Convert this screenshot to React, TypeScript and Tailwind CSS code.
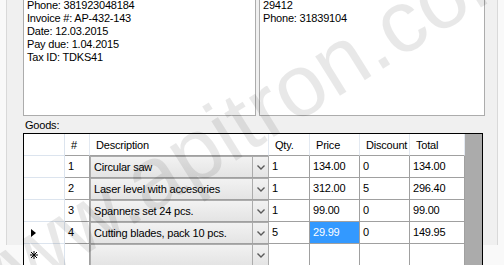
const rows = [
  { n: "1", desc: "Circular saw", qty: "1", price: "134.00", disc: "0", total: "134.00" },
  { n: "2", desc: "Laser level with accesories", qty: "1", price: "312.00", disc: "5", total: "296.40" },
  { n: "3", desc: "Spanners set 24 pcs.", qty: "1", price: "99.00", disc: "0", total: "99.00" },
  { n: "4", desc: "Cutting blades, pack 10 pcs.", qty: "5", price: "29.99", disc: "0", total: "149.95", current: true },
];

function Chevron() {
  return (
    <svg width="8" height="5" viewBox="0 0 8 5">
      <polyline points="0.5,0.5 4,4 7.5,0.5" fill="none" stroke="#5a5a5a" strokeWidth="1.4" />
    </svg>
  );
}

function Combo({ text }: { text: string }) {
  return (
    <div className="flex h-[22px] w-[179px] border-b border-[#a0a0a0]">
      <div className="flex w-full border-x border-t border-[#acacac] bg-gradient-to-b from-[#f2f2f2] to-[#e4e4e4]">
        <div className="flex-1 flex items-center pl-[3px] whitespace-nowrap overflow-hidden">{text}</div>
        <div className="w-[16px] border-l border-[#acacac] flex items-center justify-center">
          <Chevron />
        </div>
      </div>
    </div>
  );
}

function Cell({ w, children, selected }: { w: string; children?: React.ReactNode; selected?: boolean }) {
  return (
    <div
      className={`${w} h-[22px] border-r border-b border-[#a0a0a0] flex items-center pl-[3px] whitespace-nowrap ${
        selected ? "bg-[#3399ff] text-white" : "bg-white"
      }`}
    >
      {children}
    </div>
  );
}

function HeadCell({ w, children }: { w: string; children?: React.ReactNode }) {
  return (
    <div className={`${w} h-[22px] bg-white border-r border-b border-r-[#e3e9f1] border-b-[#a0a0a0] flex items-center pl-[6px] pt-[1px] whitespace-nowrap`}>
      {children}
    </div>
  );
}

function RowHeader({ children }: { children?: React.ReactNode }) {
  return (
    <div className="w-[41px] h-[22px] bg-white border-r border-b border-[#dce4ee] flex items-center pl-[7px]">
      {children}
    </div>
  );
}

export default function App() {
  return (
    <div className="relative w-[504px] h-[265px] overflow-hidden bg-[#f9f9f9] text-[11px] tracking-[-0.2px] text-black font-['Liberation_Sans',Arial,sans-serif]">
      <div className="ml-[6px] w-[492px] h-full border-x border-[#d9d9d9] bg-[#f0f0f0] pl-[16px]">
        {/* Address boxes */}
        <div className="flex gap-[3px] -mt-[20px]">
          <div className="w-[233px] h-[136px] bg-white border border-[#acacac] pt-[18px] pl-[3px] leading-[13px]">
            <div>Phone: 381923048184</div>
            <div>Invoice #: AP-432-143</div>
            <div>Date: 12.03.2015</div>
            <div>Pay due: 1.04.2015</div>
            <div>Tax ID: TDKS41</div>
          </div>
          <div className="w-[226px] h-[136px] bg-white border border-[#acacac] pt-[18px] pl-[3px] leading-[13px]">
            <div>29412</div>
            <div>Phone: 31839104</div>
          </div>
        </div>

        <div className="mt-[3px] ml-[2px] leading-[13px]">Goods:</div>

        {/* Goods grid */}
        <div className="mt-[1px] w-[460px] h-[140px] border-x border-t border-black bg-[#ababab]">
          <div className="flex">
            <RowHeader />
            <HeadCell w="w-[25px]">#</HeadCell>
            <HeadCell w="w-[179px]">Description</HeadCell>
            <HeadCell w="w-[41px]">Qty.</HeadCell>
            <HeadCell w="w-[50px]">Price</HeadCell>
            <HeadCell w="w-[50px]">Discount</HeadCell>
            <HeadCell w="w-[55px]">Total</HeadCell>
          </div>
          {rows.map((r) => (
            <div key={r.n} className="flex">
              <RowHeader>
                {r.current && (
                  <svg width="5" height="8" viewBox="0 0 5 8">
                    <polygon points="0,0 5,4 0,8" fill="#000" />
                  </svg>
                )}
              </RowHeader>
              <Cell w="w-[25px]">{r.n}</Cell>
              <Combo text={r.desc} />
              <Cell w="w-[41px]">{r.qty}</Cell>
              <Cell w="w-[50px]" selected={r.current}>
                {r.price}
              </Cell>
              <Cell w="w-[50px]">{r.disc}</Cell>
              <Cell w="w-[55px]">{r.total}</Cell>
            </div>
          ))}
          <div className="flex">
            <RowHeader>
              <svg width="8" height="8" viewBox="0 0 8 8" className="ml-[-1px]">
                <g stroke="#000" strokeWidth="1">
                  <line x1="4" y1="0" x2="4" y2="8" />
                  <line x1="0" y1="4" x2="8" y2="4" />
                  <line x1="1" y1="1" x2="7" y2="7" />
                  <line x1="7" y1="1" x2="1" y2="7" />
                </g>
              </svg>
            </RowHeader>
            <Cell w="w-[25px]" />
            <Combo text="" />
            <Cell w="w-[41px]" />
            <Cell w="w-[50px]" />
            <Cell w="w-[50px]" />
            <Cell w="w-[55px]" />
          </div>
        </div>
      </div>

      {/* Watermark */}
      <div className="pointer-events-none absolute left-[238px] top-[124px] -translate-x-1/2 -translate-y-1/2 rotate-[-32deg] whitespace-nowrap text-[88px] leading-none tracking-normal text-black/[0.09]">
        www.apitron.com
      </div>
    </div>
  );
}
